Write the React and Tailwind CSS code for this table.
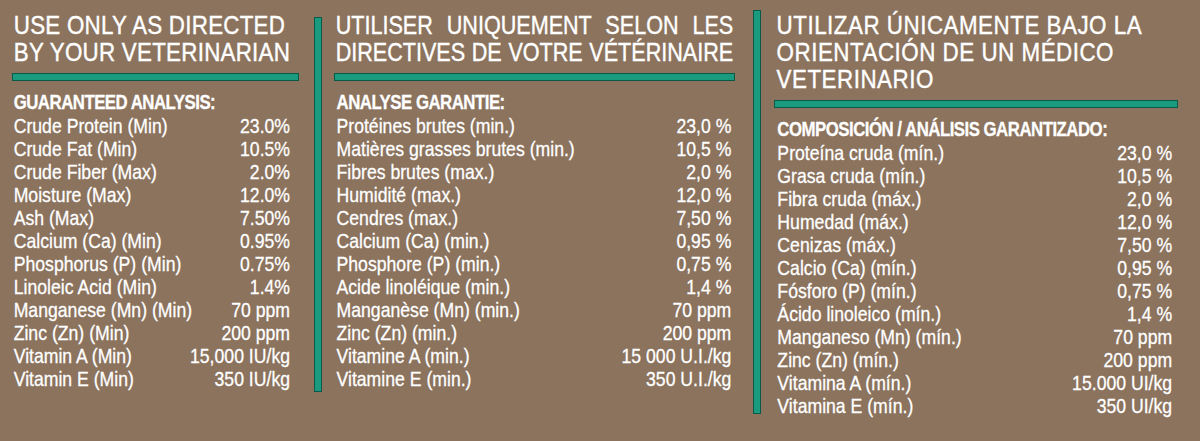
const english = [
  ['Crude Protein (Min)', '23.0%'],
  ['Crude Fat (Min)', '10.5%'],
  ['Crude Fiber (Max)', '2.0%'],
  ['Moisture (Max)', '12.0%'],
  ['Ash (Max)', '7.50%'],
  ['Calcium (Ca) (Min)', '0.95%'],
  ['Phosphorus (P) (Min)', '0.75%'],
  ['Linoleic Acid (Min)', '1.4%'],
  ['Manganese (Mn) (Min)', '70 ppm'],
  ['Zinc (Zn) (Min)', '200 ppm'],
  ['Vitamin A (Min)', '15,000 IU/kg'],
  ['Vitamin E (Min)', '350 IU/kg'],
];

const french = [
  ['Protéines brutes (min.)', '23,0 %'],
  ['Matières grasses brutes (min.)', '10,5 %'],
  ['Fibres brutes (max.)', '2,0 %'],
  ['Humidité (max.)', '12,0 %'],
  ['Cendres (max.)', '7,50 %'],
  ['Calcium (Ca) (min.)', '0,95 %'],
  ['Phosphore (P) (min.)', '0,75 %'],
  ['Acide linoléique (min.)', '1,4 %'],
  ['Manganèse (Mn) (min.)', '70 ppm'],
  ['Zinc (Zn) (min.)', '200 ppm'],
  ['Vitamine A (min.)', '15 000 U.I./kg'],
  ['Vitamine E (min.)', '350 U.I./kg'],
];

const spanish = [
  ['Proteína cruda (mín.)', '23,0 %'],
  ['Grasa cruda (mín.)', '10,5 %'],
  ['Fibra cruda (máx.)', '2,0 %'],
  ['Humedad (máx.)', '12,0 %'],
  ['Cenizas (máx.)', '7,50 %'],
  ['Calcio (Ca) (mín.)', '0,95 %'],
  ['Fósforo (P) (mín.)', '0,75 %'],
  ['Ácido linoleico (mín.)', '1,4 %'],
  ['Manganeso (Mn) (mín.)', '70 ppm'],
  ['Zinc (Zn) (mín.)', '200 ppm'],
  ['Vitamina A (mín.)', '15.000 UI/kg'],
  ['Vitamina E (mín.)', '350 UI/kg'],
];

// no narrow face installed, so text blocks are squeezed horizontally
const Rule = () => (
  <div className="mt-[7px] h-[8px] border border-[#0b5a49] bg-[#1a9b80]" />
);

const Table = ({ title, rows, className }) => (
  <div className={`mt-[10px] origin-left whitespace-nowrap [-webkit-text-stroke:0.3px_white] ${className}`}>
    <div className="text-[20px] leading-[23px] font-bold tracking-[-0.6px]">{title}</div>
    {rows.map(([label, value]) => (
      <div key={label} className="flex justify-between text-[21px] leading-[23px]">
        <span>{label}</span>
        <span>{value}</span>
      </div>
    ))}
  </div>
);

export default function App() {
  return (
    <div
      className="w-[1200px] h-[441px] bg-[#8b735e] text-white flex pl-[12px] overflow-hidden"
      style={{ fontFamily: '"Liberation Sans", Arial, sans-serif' }}
    >
      {/* English */}
      <div className="w-[287px] shrink-0 pt-[12px]">
        <div className="w-[334px] origin-left scale-x-[0.86] pl-[2px] text-[26px] leading-[27px] tracking-[0.3px] whitespace-nowrap [-webkit-text-stroke:0.4px_white]">
          <div>USE ONLY AS DIRECTED</div>
          <div>BY YOUR VETERINARIAN</div>
        </div>
        <Rule />
        <Table title="GUARANTEED ANALYSIS:" rows={english} className="w-[342px] scale-x-[0.84] pl-[2px] pr-[11px]" />
      </div>

      <div className="ml-[15px] mt-[17px] w-[8px] h-[375px] shrink-0 border border-[#0b5a49] bg-[#1a9b80]" />

      {/* French */}
      <div className="ml-[12px] w-[401px] shrink-0 pt-[12px]">
        <div className="w-[483px] origin-left scale-x-[0.83] pl-[2px] pr-[2px] text-[26px] leading-[27px] whitespace-nowrap [-webkit-text-stroke:0.4px_white]">
          <div className="text-justify [text-align-last:justify]">UTILISER UNIQUEMENT SELON LES</div>
          <div className="text-justify [text-align-last:justify]">DIRECTIVES DE VOTRE VÉTÉRINAIRE</div>
        </div>
        <Rule />
        <Table title="ANALYSE GARANTIE:" rows={french} className="w-[477px] scale-x-[0.84] pl-[3px] pr-[4px]" />
      </div>

      <div className="ml-[18px] mt-[10px] w-[8px] h-[404px] shrink-0 border border-[#0b5a49] bg-[#1a9b80]" />

      {/* Spanish */}
      <div className="ml-[13px] w-[404px] shrink-0 pt-[12px]">
        <div className="w-[470px] origin-left scale-x-[0.86] pl-[3px] text-[26px] leading-[27px] tracking-[0.6px] whitespace-nowrap [-webkit-text-stroke:0.4px_white]">
          <div>UTILIZAR ÚNICAMENTE BAJO LA</div>
          <div>ORIENTACIÓN DE UN MÉDICO</div>
          <div>VETERINARIO</div>
        </div>
        <Rule />
        <Table title="COMPOSICIÓN / ANÁLISIS GARANTIZADO:" rows={spanish} className="w-[481px] scale-x-[0.84] pl-[4px] pr-[7px]" />
      </div>
    </div>
  );
}
